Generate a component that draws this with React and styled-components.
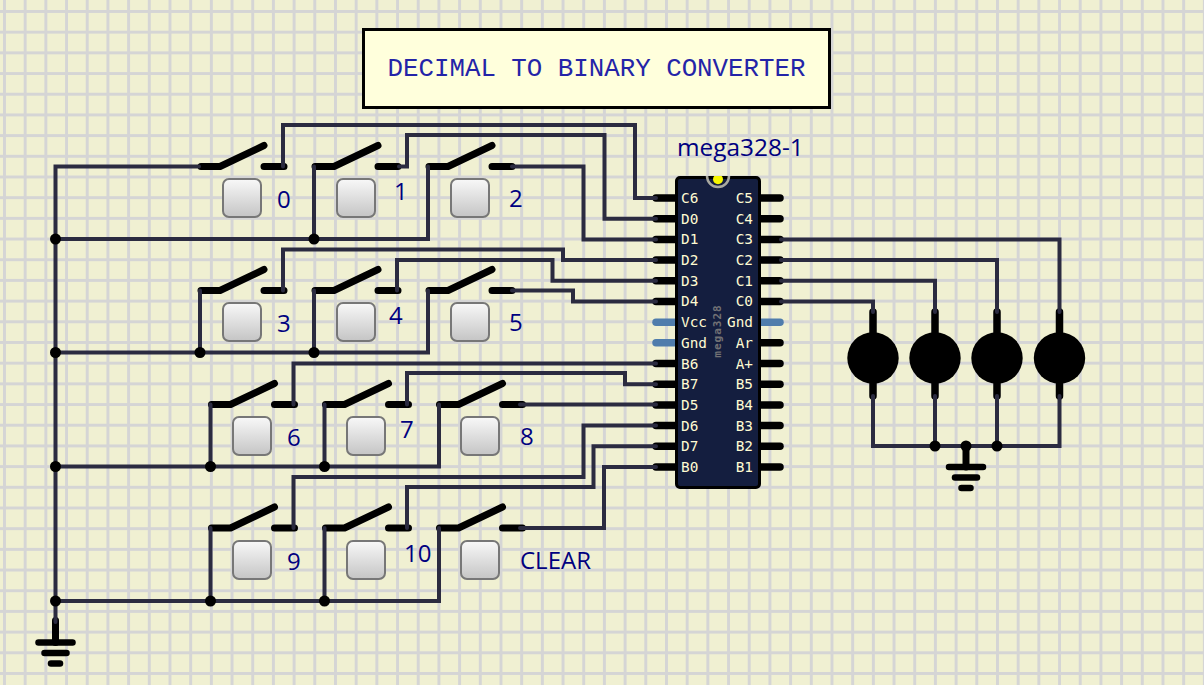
import React from "react"
import styled, { createGlobalStyle } from "styled-components"

const GlobalStyle = createGlobalStyle`
  html, body {
    margin: 0;
    padding: 0;
    overflow: hidden;
  }
`

const Canvas = styled.div`
  position: relative;
  width: 1204px;
  height: 685px;
  overflow: hidden;
  background-color: #f0f0d2;
  background-image:
    linear-gradient(to right, #d5d5d5 2.5px, transparent 2.5px),
    linear-gradient(to bottom, #d5d5d5 2.5px, transparent 2.5px);
  background-size: 20.7px 20.7px;
  background-position: 3px 10px;
  font-family: "Open Sans", sans-serif;
`

const WireLayer = styled.svg`
  position: absolute;
  top: 0;
  left: 0;
`

const TitleBox = styled.div`
  position: absolute;
  top: 28px;
  left: 362px;
  box-sizing: border-box;
  width: 469px;
  height: 81px;
  padding-top: 2px;
  display: flex;
  align-items: center;
  justify-content: center;
  background: #ffffdc;
  border: 3px solid #000;
  color: #2424a8;
  font-family: "Liberation Mono", monospace;
  font-size: 25.8px;
  white-space: pre;
`

const PushButton = styled.div`
  position: absolute;
  top: ${(p) => p.$y}px;
  left: ${(p) => p.$x}px;
  box-sizing: border-box;
  width: 40px;
  height: 40px;
  border: 2px solid #777;
  border-radius: 7px;
  background: linear-gradient(to bottom, #f7f7f7, #c6c6c6);
`

const Label = styled.span`
  position: absolute;
  top: ${(p) => p.$y}px;
  left: ${(p) => p.$x}px;
  color: #000080;
  font-size: 24px;
  line-height: 30px;
  white-space: pre;
`

const ChipName = styled.span`
  position: absolute;
  top: 130px;
  left: 677px;
  color: #000080;
  font-size: 24.4px;
  line-height: 34px;
  white-space: pre;
`

const Chip = styled.div`
  position: absolute;
  top: 176px;
  left: 675px;
  box-sizing: border-box;
  width: 86px;
  height: 313px;
  padding: 9px 5px 0 3px;
  display: grid;
  grid-template-columns: 1fr 1fr;
  grid-auto-rows: 20.69px;
  background: #141e3f;
  border: 3.5px solid #000;
  border-radius: 5px;
`

const PinLabel = styled.span`
  justify-self: ${(p) => (p.$right ? "end" : "start")};
  color: #fffbd2;
  font-family: "DejaVu Sans Mono", monospace;
  font-size: 14.4px;
  line-height: 20.69px;
  white-space: pre;
`

const ChipMark = styled.span`
  position: absolute;
  top: 147px;
  left: 5px;
  width: 70px;
  transform: rotate(-90deg);
  transform-origin: center;
  text-align: center;
  color: #717174;
  font-family: "DejaVu Sans Mono", monospace;
  font-size: 11px;
  font-weight: 700;
  letter-spacing: 1px;
  line-height: 10px;
`

const ChipNotch = styled.svg`
  position: absolute;
  top: -3.5px;
  left: 24.5px;
`

const WIRE = "#2b2b40"
const PIN_Y = (i) => 198 + i * 20.69

const leftPins = ["C6", "D0", "D1", "D2", "D3", "D4", "Vcc", "Gnd", "B6", "B7", "D5", "D6", "D7", "B0"]
const rightPins = ["C5", "C4", "C3", "C2", "C1", "C0", "Gnd", "Ar", "A+", "B5", "B4", "B3", "B2", "B1"]

const switches = [
  [199, 166.5], [313, 166.5], [427, 166.5],
  [199, 290.5], [313, 290.5], [427, 290.5],
  [209.5, 404.5], [323.5, 404.5], [437.5, 404.5],
  [209.5, 528], [323.5, 528], [437.5, 528],
]

const buttons = [
  [222, 178], [336, 178], [450, 178],
  [222, 302], [336, 302], [450, 302],
  [232, 416], [346, 416], [460, 416],
  [232, 540], [346, 540], [460, 540],
]

const labels = [
  ["0", 277, 184], ["1", 394, 176], ["2", 509, 183],
  ["3", 277, 308], ["4", 389, 300], ["5", 509, 307],
  ["6", 287, 422], ["7", 400, 414], ["8", 520, 421],
  ["9", 287, 546], ["10", 404, 538], ["CLEAR", 520, 545],
]

const wires = [
  // ground rails
  "M199 166.5H55.5V622",
  "M55.5 239H428V166.5",
  "M314 166.5V239",
  "M55.5 352.5H428V290.5",
  "M200 290.5V352.5",
  "M314 290.5V352.5",
  "M55.5 466.5H439V404.5",
  "M210.5 404.5V466.5",
  "M324.5 404.5V466.5",
  "M55.5 601H439V528",
  "M210.5 528V601",
  "M324.5 528V601",
  // switches to the chip
  "M283 166.5V125H635V198H656",
  "M399 166.5H407V135H604.5V218.7H656",
  "M512 166.5H583.5V239.4H656",
  "M283 290.5V249.5H563V260H656",
  "M397 290.5V260H552.5V280.8H656",
  "M512 290.5H573V301.4H656",
  "M293.5 404.5V363.5H656",
  "M407 404.5V373H625V384.2H656",
  "M520 404.5H656",
  "M293.5 528V477H583.5V425.5H656",
  "M407 528V487H593.5V446.2H656",
  "M520 528H604V467H656",
  // chip to the lamps
  "M781 239.4H1059.5V312",
  "M781 260H997V312",
  "M781 280.8H935V312",
  "M781 301.4H873V312",
  "M873 396V446H1059.5V396",
  "M935 396V446",
  "M997 396V446",
]

const junctions = [
  [55.5, 239], [314, 239], [55.5, 352.5], [200, 352.5], [314, 352.5],
  [55.5, 466.5], [210.5, 466.5], [324.5, 466.5],
  [55.5, 601], [210.5, 601], [324.5, 601],
  [935, 446], [966, 446], [997, 446],
]

const lamps = [873, 935, 997, 1059.5]

function Ground({ x, y }) {
  return (
    <g stroke="#000" strokeLinecap="round" fill="none">
      <path d={`M${x} ${y}V${y + 22}`} strokeWidth="7" />
      <path d={`M${x - 17} ${y + 22}H${x + 17}`} strokeWidth="6.5" />
      <path d={`M${x - 11} ${y + 32.5}H${x + 11}`} strokeWidth="6.5" />
      <path d={`M${x - 4.5} ${y + 43}H${x + 4.5}`} strokeWidth="6.5" />
    </g>
  )
}

function SwitchSymbol({ x, y }) {
  return (
    <path
      d={`M${x + 2} ${y}H${x + 21}L${x + 65} ${y - 21}M${x + 65} ${y}H${x + 85}`}
      stroke="#000"
      strokeWidth="7"
      strokeLinecap="round"
      strokeLinejoin="round"
      fill="none"
    />
  )
}

function Schematic() {
  return (
    <WireLayer width="1204" height="685" viewBox="0 0 1204 685">
      {switches.map(([x, y], i) => (
        <SwitchSymbol key={i} x={x} y={y} />
      ))}
      {leftPins.map((name, i) => (
        <path
          key={i}
          d={`M656 ${PIN_Y(i)}H680`}
          stroke={i === 6 || i === 7 ? "#4f7cac" : "#000"}
          strokeWidth="7.5"
          strokeLinecap="round"
        />
      ))}
      {rightPins.map((name, i) => (
        <path
          key={i}
          d={`M756 ${PIN_Y(i)}H780`}
          stroke={i === 6 ? "#4f7cac" : "#000"}
          strokeWidth="7.5"
          strokeLinecap="round"
        />
      ))}
      {lamps.map((x) => (
        <g key={x}>
          <path d={`M${x} 312V396`} stroke="#000" strokeWidth="7.5" strokeLinecap="round" />
          <circle cx={x} cy="358" r="25.7" fill="#000" />
        </g>
      ))}
      <Ground x={55.5} y={620.5} />
      <Ground x={966} y={445} />
      {wires.map((d, i) => (
        <path key={i} d={d} stroke={WIRE} strokeWidth="4" strokeLinejoin="miter" strokeLinecap="round" fill="none" />
      ))}
      {junctions.map(([x, y], i) => (
        <circle key={i} cx={x} cy={y} r="5.5" fill="#000" />
      ))}
    </WireLayer>
  )
}

export default function App() {
  return (
    <>
      <GlobalStyle />
      <Canvas>
        <Schematic />
        <TitleBox>DECIMAL TO BINARY CONVERTER</TitleBox>
        {buttons.map(([x, y], i) => (
          <PushButton key={i} $x={x} $y={y} />
        ))}
        {labels.map(([text, x, y]) => (
          <Label key={text} $x={x} $y={y}>{text}</Label>
        ))}
        <ChipName>mega328-1</ChipName>
        <Chip>
          {leftPins.map((name, i) => (
            <React.Fragment key={i}>
              <PinLabel>{name}</PinLabel>
              <PinLabel $right>{rightPins[i]}</PinLabel>
            </React.Fragment>
          ))}
          <ChipMark>mega328</ChipMark>
          <ChipNotch width="30" height="16" viewBox="0 0 30 16">
            <path d="M4 0A11 11 0 0 0 26 0" fill="none" stroke="#a9a9a0" strokeWidth="2.5" />
            <circle cx="15" cy="3.3" r="5" fill="#f6f600" />
          </ChipNotch>
        </Chip>
      </Canvas>
    </>
  )
}
